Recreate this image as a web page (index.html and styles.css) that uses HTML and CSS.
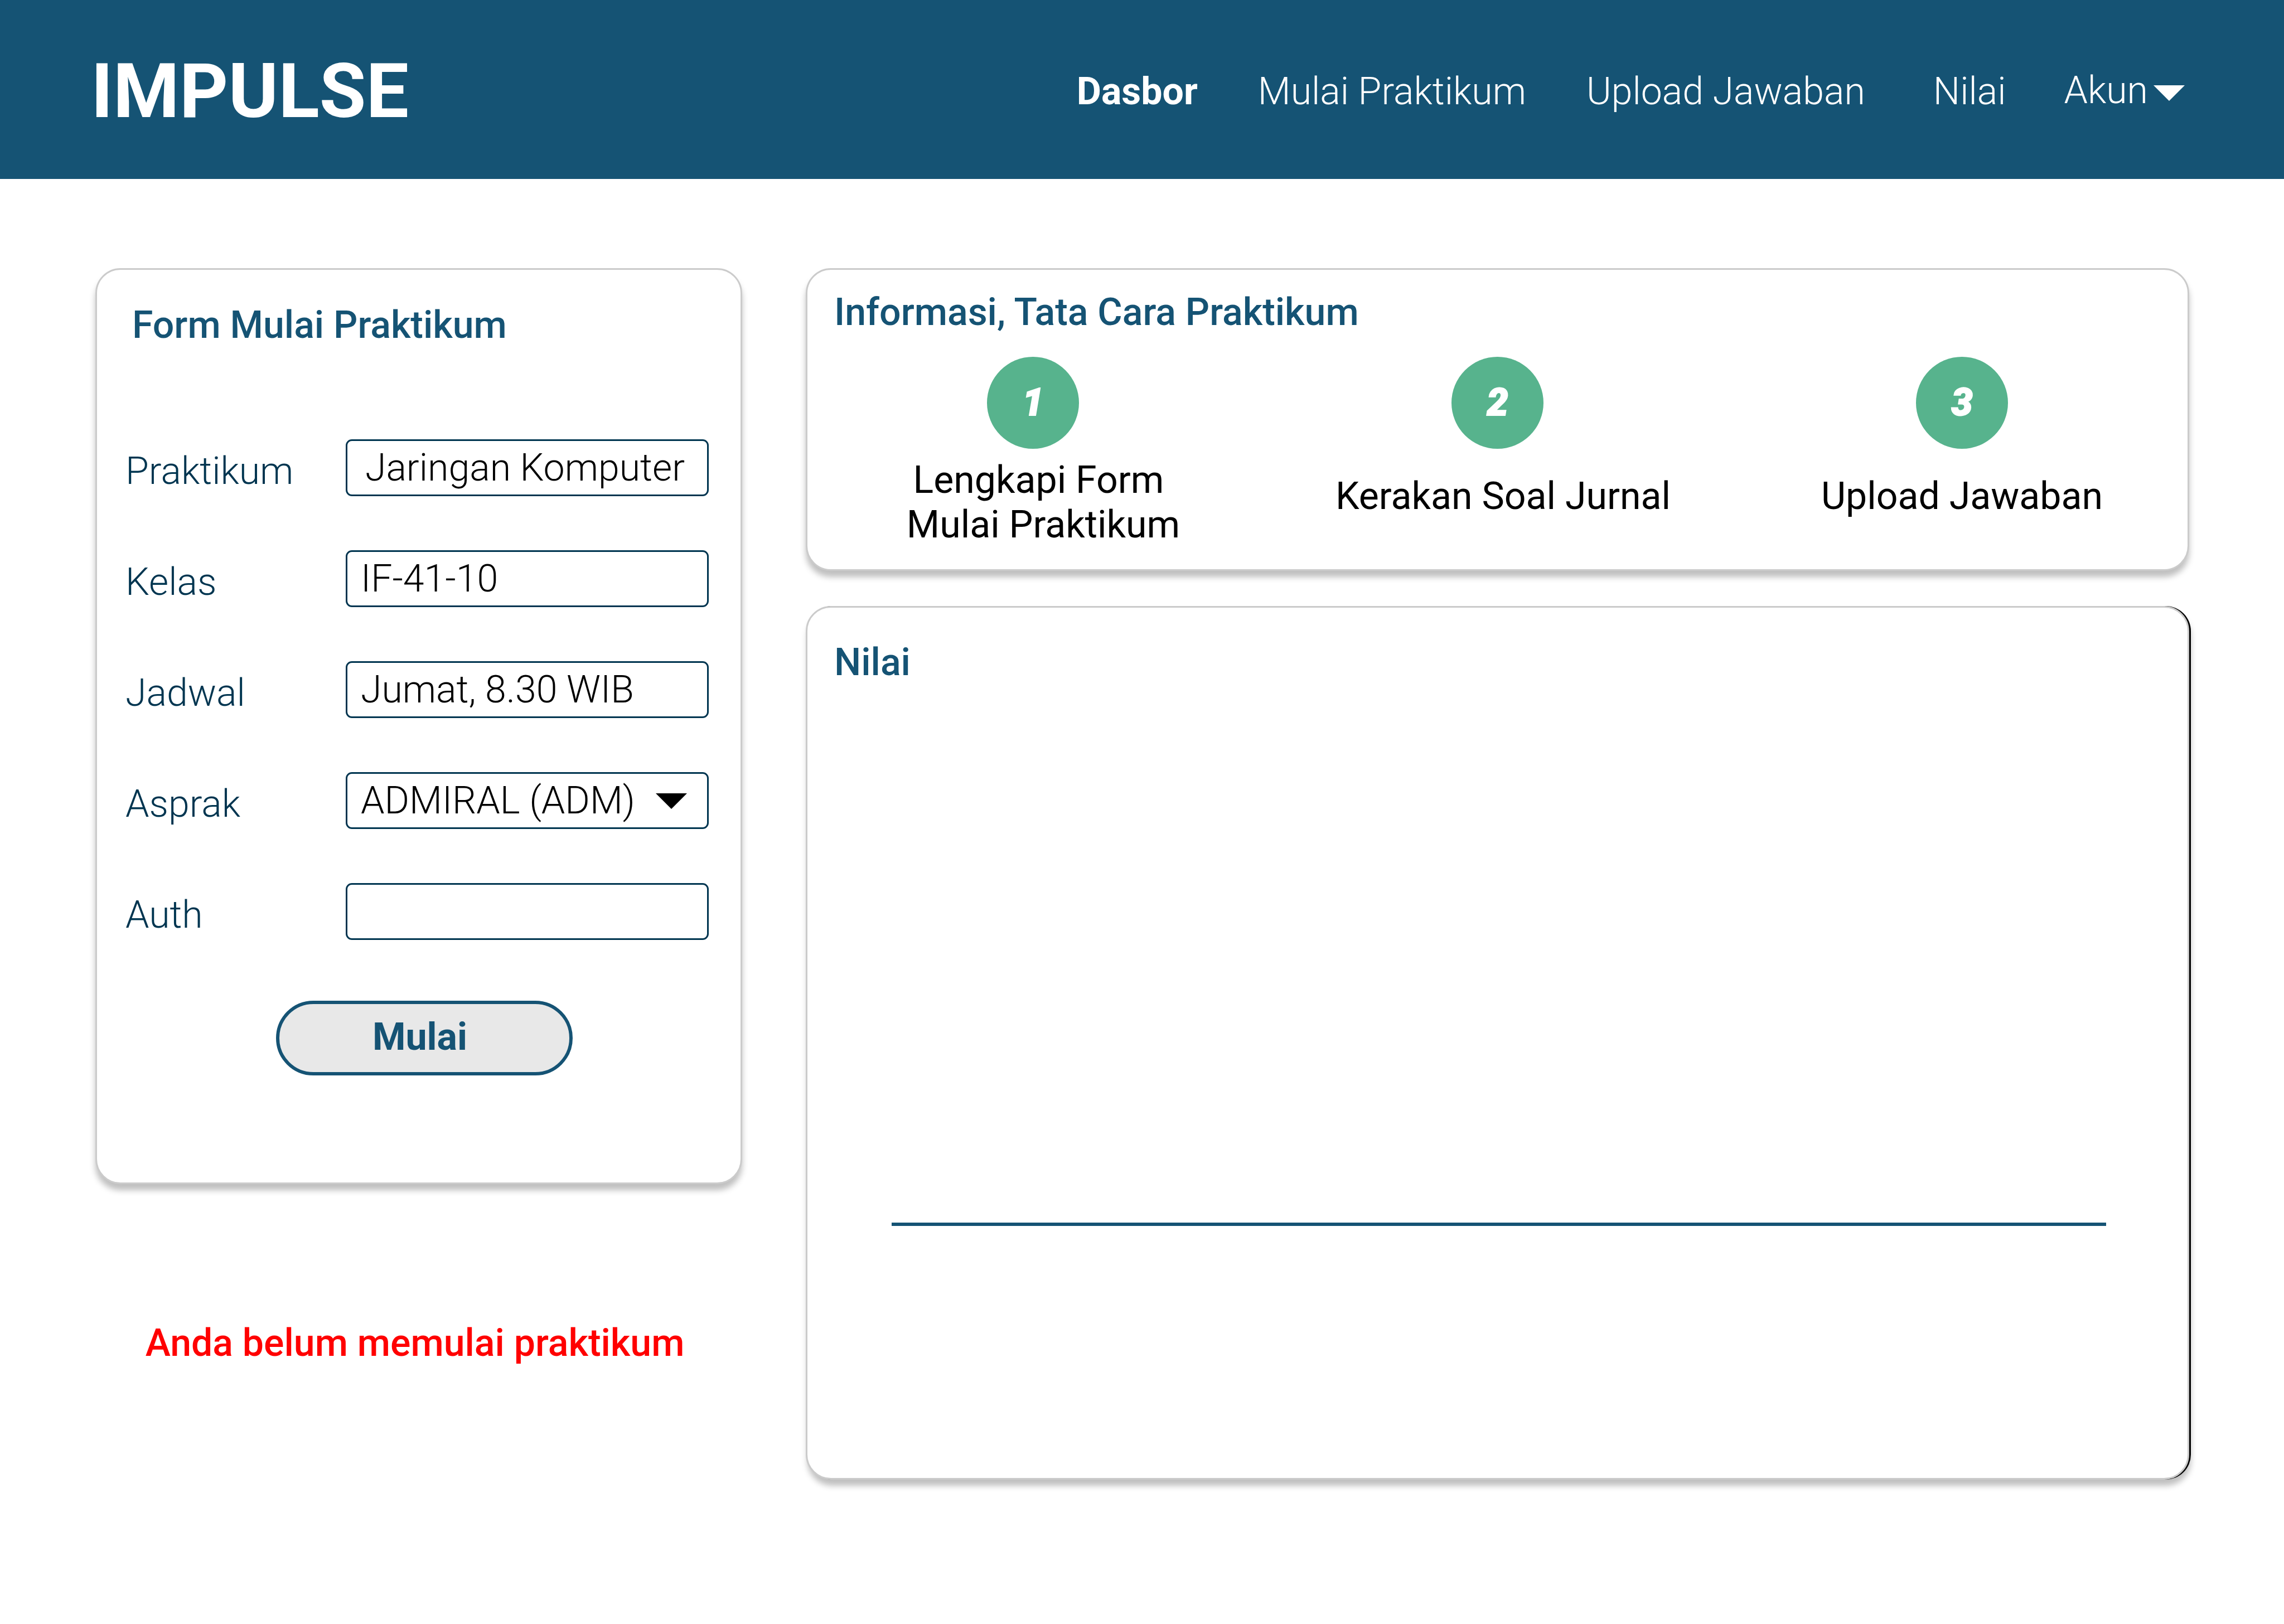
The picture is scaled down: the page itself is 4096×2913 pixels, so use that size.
FILE: index.html
```html
<!DOCTYPE html>
<html lang="id">
<head>
<meta charset="utf-8">
<title>IMPULSE</title>
<meta name="viewport" content="width=device-width, initial-scale=1">
<link rel="stylesheet" href="styles.css">
</head>
<body>
<header class="topbar">
  <a class="logo" href="#">IMPULSE</a>
  <nav class="nav">
    <a class="nav-link nav-link-active" href="#">Dasbor</a>
    <a class="nav-link" href="#">Mulai Praktikum</a>
    <a class="nav-link" href="#">Upload Jawaban</a>
    <a class="nav-link nav-link-short" href="#">Nilai</a>
    <button class="account" type="button">
      <span class="account-name">Akun</span>
      <svg class="account-arrow" viewBox="0 0 56 28" aria-hidden="true"><path d="M0 0H56L28 28Z" fill="currentColor"/></svg>
    </button>
  </nav>
</header>

<main class="layout">
  <div class="column">
    <form class="card form-card">
      <h2 class="title form-title">Form Mulai Praktikum</h2>
      <div class="fields">
        <div class="row">
          <label class="label" for="praktikum">Praktikum</label>
          <input class="field field-centered" id="praktikum" type="text" value="Jaringan Komputer">
        </div>
        <div class="row">
          <label class="label" for="kelas">Kelas</label>
          <input class="field" id="kelas" type="text" value="IF-41-10">
        </div>
        <div class="row">
          <label class="label" for="jadwal">Jadwal</label>
          <input class="field" id="jadwal" type="text" value="Jumat, 8.30 WIB">
        </div>
        <div class="row">
          <label class="label" for="asprak">Asprak</label>
          <div class="select-wrap">
            <select class="field" id="asprak"><option>ADMIRAL (ADM)</option></select>
            <svg class="select-arrow" viewBox="0 0 56 28" aria-hidden="true"><path d="M0 0H56L28 28Z"/></svg>
          </div>
        </div>
        <div class="row">
          <label class="label" for="auth">Auth</label>
          <input class="field" id="auth" type="text">
        </div>
      </div>
      <div class="actions">
        <button class="submit" type="button">Mulai</button>
      </div>
    </form>
    <p class="warning">Anda belum memulai praktikum</p>
  </div>

  <div class="column column-right">
    <section class="card info-card">
      <h2 class="title">Informasi, Tata Cara Praktikum</h2>
      <ol class="steps">
        <li class="step">
          <span class="step-number">1</span>
          <span class="step-text step-text-inset">Lengkapi Form<br>&nbsp;Mulai Praktikum</span>
        </li>
        <li class="step">
          <span class="step-number">2</span>
          <span class="step-text step-text-inset step-text-single">Kerakan Soal Jurnal</span>
        </li>
        <li class="step">
          <span class="step-number">3</span>
          <span class="step-text step-text-single">Upload Jawaban</span>
        </li>
      </ol>
    </section>
    <section class="card score-card">
      <h2 class="title">Nilai</h2>
      <hr class="axis">
    </section>
  </div>
</main>
</body>
</html>
```
FILE: styles.css
```css
* {
  box-sizing: border-box;
}

body {
  margin: 0;
  min-height: 100vh;
  background: #fff;
  color: #000;
  font-family: Roboto, "Liberation Sans", sans-serif;
  font-size: 68px;
  line-height: 80px;
}

/* Top bar */

.topbar {
  display: flex;
  align-items: center;
  justify-content: space-between;
  min-height: 321px;
  padding: 6px 178px 0 163px;
  background: #155374;
  color: #fff;
}

.logo {
  color: inherit;
  font-size: 136px;
  font-weight: 700;
  line-height: 160px;
  text-decoration: none;
}

.nav {
  display: flex;
  align-items: center;
  gap: 108px;
}

.nav-link {
  color: inherit;
  font-weight: 300;
  text-decoration: none;
}

.nav-link-active {
  font-weight: 700;
}

.nav-link-short {
  margin: 0 -4px 0 14px;
}

.account {
  display: flex;
  align-items: center;
  gap: 10px;
  padding: 0;
  border: 0;
  background: none;
  color: inherit;
  font: inherit;
  font-weight: 300;
}

.account-name {
  padding-bottom: 4px;
}

.account-arrow {
  width: 56px;
  height: 28px;
  margin-top: 6px;
}

/* Page */

.layout {
  display: grid;
  grid-template-columns: 1160fr 2481fr;
  gap: 114px;
  padding: 160px 170px 160px 171px;
}

.column {
  min-width: 0;
}

.column-right {
  display: flex;
  flex-direction: column;
  gap: 63px;
}

.card {
  border: 3px solid #cbcbcb;
  border-radius: 45px;
  background: #fff;
  box-shadow: 0 11px 11px rgba(0, 0, 0, 0.25);
}

.title {
  margin: 0;
  color: #155374;
  font-size: 68px;
  font-weight: 500;
  line-height: 80px;
}

/* Form */

.form-card {
  padding: 59px 57px 192px 51px;
}

.form-title {
  padding-left: 12px;
}

.fields {
  display: grid;
  gap: 97px;
  margin-top: 165px;
}

.row {
  display: grid;
  grid-template-columns: 395px 1fr;
  align-items: center;
  height: 102px;
}

.label {
  padding-top: 12px;
  color: #003550;
  font-weight: 300;
}

.field {
  display: block;
  width: 100%;
  height: 102px;
  margin: 0;
  padding: 0 24px;
  border: 3px solid #003550;
  border-radius: 11px;
  outline: 0;
  background: #fff;
  color: #000;
  font: inherit;
  font-weight: 300;
  appearance: none;
}

.field-centered {
  padding-right: 32px;
  text-align: center;
}

.select-wrap {
  position: relative;
}

.select-arrow {
  position: absolute;
  top: 38px;
  right: 39px;
  width: 56px;
  height: 28px;
  pointer-events: none;
}

.actions {
  display: flex;
  justify-content: center;
  margin-top: 109px;
  padding-left: 26px;
}

.submit {
  width: 532px;
  height: 134px;
  padding: 0 16px 4px 0;
  border: 6px solid #155374;
  border-radius: 67px;
  background: #e8e8e8;
  color: #155374;
  font: inherit;
  font-weight: 700;
}

.warning {
  margin: 245px 0 0;
  padding-right: 14px;
  color: #f00;
  font-weight: 500;
  text-align: center;
}

/* Steps */

.info-card {
  padding: 36px 48px 40px;
}

.steps {
  display: grid;
  grid-template-columns: repeat(3, 1fr);
  column-gap: 200px;
  margin: 40px 40px 0;
  padding: 0;
  list-style: none;
}

.step {
  display: flex;
  flex-direction: column;
  align-items: center;
  gap: 16px;
  text-align: center;
}

.step-number {
  width: 165px;
  height: 165px;
  border-radius: 50%;
  background: #57b38d;
  color: #fff;
  font-style: italic;
  font-weight: 900;
  line-height: 165px;
  -webkit-text-stroke: 2px #fff;
}

.step-text {
  min-height: 160px;
}

.step-text-inset {
  padding-left: 20px;
}

.step-text-single {
  padding-top: 29px;
}

/* Scores */

.score-card {
  min-height: 1567px;
  padding: 58px 48px;
  box-shadow: 3px 0 0 #000, 3px 11px 11px rgba(0, 0, 0, 0.25);
}

.axis {
  height: 6px;
  margin: 965px 98px 0 103px;
  border: 0;
  background: #155374;
}
```
